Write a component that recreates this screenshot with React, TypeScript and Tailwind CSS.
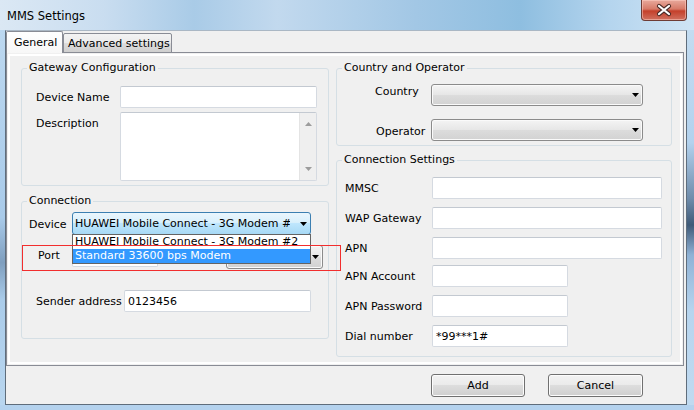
import React from "react";

function Arrow({ className = "" }: { className?: string }) {
  return (
    <svg width="7" height="4" viewBox="0 0 7 4" className={className}>
      <path d="M0 0h7L3.5 4z" fill="currentColor" />
    </svg>
  );
}

function TextBox({ width, height = "h-[22px]", value }: { width: string; height?: string; value?: string }) {
  return (
    <div className={`${width} ${height} flex items-center rounded-[2px] border border-[#d5dae1] border-t-[#c3c9d1] bg-white pl-[3px] pt-[1px]`}>
      {value}
    </div>
  );
}

function Combo({ width, height = "h-[22px]", className = "" }: { width: string; height?: string; className?: string }) {
  return (
    <div
      className={`${width} ${height} ${className} flex items-center justify-end rounded-[3px] border border-[#8b8b8b] bg-[linear-gradient(#f4f4f4,#e6e6e6_50%,#dcdcdc_51%,#d2d2d2)] pr-[3px] text-black shadow-[inset_0_0_0_1px_#fafafa]`}
    >
      <Arrow />
    </div>
  );
}

function Group({ title, className, children }: { title: string; className: string; children?: React.ReactNode }) {
  return (
    <fieldset className={`rounded-[3px] border border-[#d5dfe5] ${className}`}>
      <legend className="ml-[5px] px-[2px] leading-[14px]">{title}</legend>
      {children}
    </fieldset>
  );
}

function Button({ label, width }: { label: string; width: string }) {
  return (
    <div
      className={`${width} flex h-[23px] items-center justify-center rounded-[3px] border border-[#707070] bg-[linear-gradient(#f2f2f2,#ebebeb_45%,#dddddd_50%,#cfcfcf)] pt-[1px] shadow-[inset_0_0_0_1px_#fcfcfc]`}
    >
      {label}
    </div>
  );
}

const settingsRows = [
  { label: "MMSC", width: "w-[230px]", mt: "mt-[10px]" },
  { label: "WAP Gateway", width: "w-[230px]", mt: "mt-[8px]" },
  { label: "APN", width: "w-[230px]", mt: "mt-[8px]" },
  { label: "APN Account", width: "w-[136px]", mt: "mt-[6px]" },
  { label: "APN Password", width: "w-[136px]", mt: "mt-[8px]" },
  { label: "Dial number", width: "w-[136px]", mt: "mt-[8px]", value: "*99***1#" },
];

export default function App() {
  return (
    <div className="relative flex h-[410px] w-[694px] flex-col overflow-hidden bg-[#b4d1ec] font-['DejaVu_Sans',sans-serif] text-[11px] leading-[14px] text-black">
      {/* title bar */}
      <div className="flex h-[30px] shrink-0 items-start justify-between bg-[linear-gradient(90deg,#dbe8f4_0%,#c9ddf0_15%,#a9cbe7_28%,#c2d9ee_40%,#a2c7e5_60%,#8ebee0_75%,#b5d5ee_88%,#cfe4f5_100%)]">
        <div className="pl-[7px] pt-[9px] text-[11.5px]">MMS Settings</div>
        <div className="mr-[7px] h-[21px] w-[46px] rounded-b-[4px] border border-t-0 border-[#6e3c35] bg-[linear-gradient(#e8a99c,#d77a68_45%,#c4402b_55%,#d0705f)] shadow-[inset_0_0_0_1px_rgba(255,210,200,0.5)]">
          <svg width="44" height="20" viewBox="0 0 44 20">
            <path d="M17 6l10 8M27 6l-10 8" stroke="#4a2a26" strokeWidth="4.2" strokeLinecap="round" />
            <path d="M17 6l10 8M27 6l-10 8" stroke="#ffffff" strokeWidth="2.2" strokeLinecap="round" />
          </svg>
        </div>
      </div>

      <div className="flex h-[375px] shrink-0">
        <div className="w-[5px] bg-[linear-gradient(#bcd8f0_0%,#a9cbea_50%,#7f9fbf_62%,#aaccea_72%,#b9d6ef_100%)]" />
        {/* client area */}
        <div className="flex w-[682px] flex-col border border-[#5f6d7b] border-t-[#aab7c4] bg-[#f0f0f0]">
          {/* tabs */}
          <div className="relative z-10 -mb-px flex h-[22px] items-end">
            <div className="flex h-[22px] w-[57px] items-center rounded-t-[2px] border border-b-0 border-[#898c95] bg-[linear-gradient(#ffffff,#f7f7f7)] pl-[7px]">
              General
            </div>
            <div className="flex h-[20px] w-[109px] items-center rounded-t-[2px] border border-[#898c95] bg-[linear-gradient(#f3f3f3,#ebebeb_50%,#dddddd_51%,#cfcfcf)] pl-[4px] pt-[2px]">
              Advanced settings
            </div>
          </div>

          {/* tab page */}
          <div className="flex h-[314px] w-[678px] gap-[7px] border border-[#898c95] bg-[#f0f0f0] pl-[14px] pr-[10px] pt-[8px] shadow-[inset_0_0_0_1px_#f0f0f0,inset_0_0_0_3px_#ffffff]">
            {/* left column */}
            <div className="flex w-[308px] flex-col">
              <Group title="Gateway Configuration" className="h-[125px]">
                <div className="mt-[11px] flex items-center pl-[14px]">
                  <div className="w-[84px] pt-[2px]">Device Name</div>
                  <TextBox width="w-[197px]" />
                </div>
                <div className="mt-[4px] flex items-start pl-[14px]">
                  <div className="mt-[5px] w-[84px]">Description</div>
                  <div className="flex h-[69px] w-[197px] justify-end rounded-[2px] border border-[#d5dae1] border-t-[#c3c9d1] bg-white">
                    <div className="flex w-[17px] flex-col items-center justify-between border-l border-[#e4e4e4] bg-[#efefef] py-[9px] text-[#9c9c9c]">
                      <Arrow className="rotate-180" />
                      <Arrow />
                    </div>
                  </div>
                </div>
              </Group>

              <Group title="Connection" className="mt-[8px] h-[145px]">
                <div className="mt-[4px] flex items-center pl-[7px]">
                  <div className="w-[43px] pt-[2px]">Device</div>
                  <div className="relative">
                    <div className="flex h-[23px] w-[239px] items-center justify-between rounded-[3px] border border-[#3c7fb1] bg-[linear-gradient(#eaf6fd,#d9f0fc_45%,#bee6fd_50%,#a7d9f5)] pl-[2px] pr-[3px] pt-[1px]">
                      <span className="w-[215px] overflow-hidden whitespace-nowrap">HUAWEI Mobile Connect - 3G Modem #2</span>
                      <Arrow />
                    </div>
                    {/* open list */}
                    <div className="absolute left-0 top-[22px] z-20 w-[239px] border border-[#646464] bg-white">
                      <div className="h-[14px] whitespace-nowrap pl-[2px] leading-[14px]">HUAWEI Mobile Connect - 3G Modem #2</div>
                      <div className="h-[14px] whitespace-nowrap bg-[#3399ff] pl-[2px] leading-[14px] text-white">Standard 33600 bps Modem</div>
                    </div>
                  </div>
                </div>
                <div className="mt-[9px] flex items-start pl-[16px]">
                  <div className="mt-[5px] w-[34px]">Port</div>
                  <TextBox width="w-[86px]" height="h-[23px]" />
                  <Combo width="w-[97px]" height="h-[24px]" className="ml-[68px] mt-[1px]" />
                </div>
                <div className="mt-[21px] flex items-center pl-[14px]">
                  <div className="w-[88px] pt-[2px]">Sender address</div>
                  <TextBox width="w-[187px]" value="0123456" />
                </div>
              </Group>
            </div>

            {/* right column */}
            <div className="flex w-[336px] flex-col">
              <Group title="Country and Operator" className="h-[85px]">
                <div className="mt-[9px] flex items-start pl-[38px]">
                  <div className="mt-[1px] w-[56px]">Country</div>
                  <Combo width="w-[212px]" />
                </div>
                <div className="mt-[13px] flex items-start pl-[39px]">
                  <div className="mt-[6px] w-[55px]">Operator</div>
                  <Combo width="w-[212px]" />
                </div>
              </Group>

              <Group title="Connection Settings" className="mt-[7px] h-[204px]">
                {settingsRows.map((row) => (
                  <div key={row.label} className={`${row.mt} flex items-center pl-[8px]`}>
                    <div className="w-[87px] pt-[2px]">{row.label}</div>
                    <TextBox width={row.width} value={row.value} />
                  </div>
                ))}
              </Group>
            </div>
          </div>

          {/* buttons */}
          <div className="mt-[8px] flex pl-[425px]">
            <Button label="Add" width="w-[94px]" />
            <div className="ml-[23px]">
              <Button label="Cancel" width="w-[95px]" />
            </div>
          </div>
        </div>
        <div className="w-[7px] bg-[linear-gradient(#c3dcf1_0%,#b3d2ee_30%,#6f8cab_45%,#3f5a78_52%,#8fb2d6_60%,#b7d5ef_75%,#c0daf0_100%)]" />
      </div>
      <div className="h-[5px] bg-[#b4d2ee]" />

      {/* red annotation box */}
      <div className="absolute left-[22px] top-[245px] z-30 h-[26px] w-[319px] border border-[#f22e2e]" />
    </div>
  );
}
